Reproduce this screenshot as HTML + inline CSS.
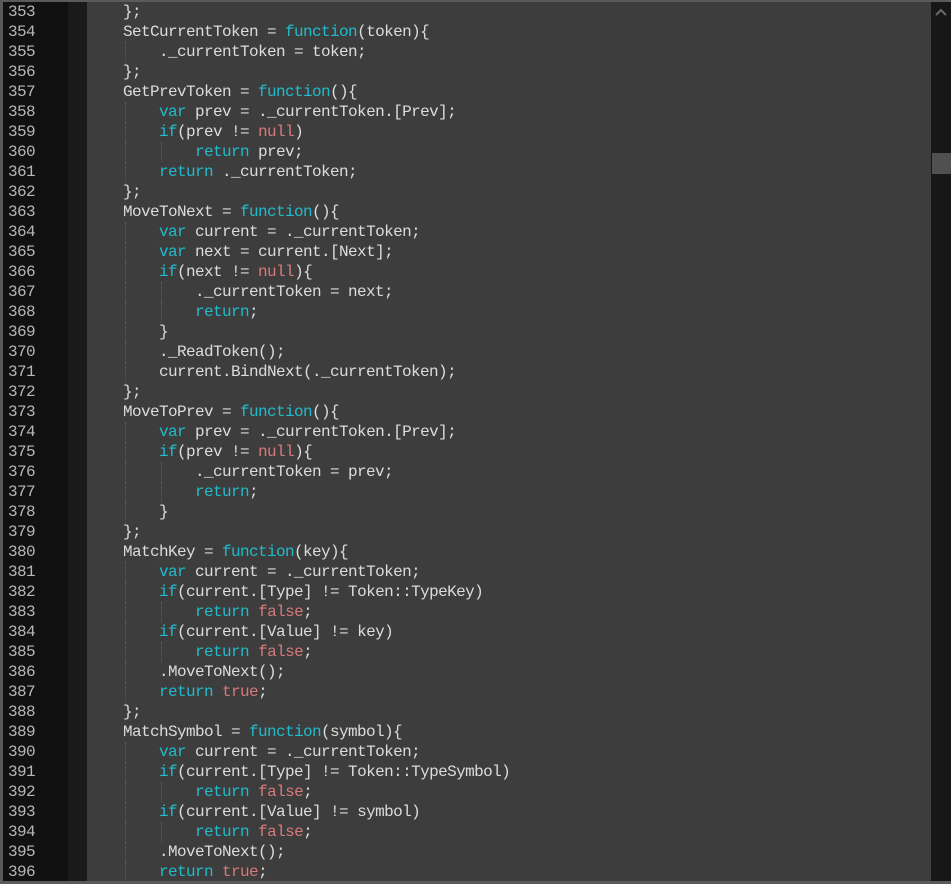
<!DOCTYPE html>
<html><head><meta charset="utf-8"><style>
html,body{margin:0;padding:0;width:951px;height:884px;overflow:hidden;background:#3d3d3d;}
#top{position:absolute;left:0;top:0;width:951px;height:2px;background:#5a5a5a;}
#bot{position:absolute;left:0;top:881px;width:951px;height:3px;background:#5a5a5a;}
#lb{position:absolute;left:0;top:0;width:3px;height:884px;background:#5a5a5a;}
#gut{position:absolute;left:3px;top:2px;width:65px;height:879px;background:#111;}
#strip{position:absolute;left:68px;top:2px;width:19px;height:879px;background:#1a1a1a;}
#sb{position:absolute;left:931px;top:2px;width:20px;height:879px;background:#171717;}
#thumb{position:absolute;left:932px;top:153px;width:19px;height:21px;background:#505050;}
.ln{position:absolute;left:8px;font:16px/20px "Liberation Mono",monospace;letter-spacing:-0.6px;color:#b8b8b8;white-space:pre;}
.cd{position:absolute;left:87px;font:16px/20px "Liberation Mono",monospace;letter-spacing:-0.6px;color:#dcdcdc;white-space:pre;}
.k{color:#20bccc}.n{color:#d87a7a}
.g{position:absolute;width:0;height:20px;border-left:1px dotted #5c5c5c;}
</style></head><body>
<div id="top"></div><div id="lb"></div><div id="gut"></div><div id="strip"></div>
<div id="sb"></div><div id="thumb"></div>
<svg style="position:absolute;left:934px;top:7px" width="14" height="10"><path d="M2 8 L7 3 L12 8" stroke="#6a6a6a" stroke-width="2" fill="none"/></svg>
<div class="ln" style="top:2px">353
354
355
356
357
358
359
360
361
362
363
364
365
366
367
368
369
370
371
372
373
374
375
376
377
378
379
380
381
382
383
384
385
386
387
388
389
390
391
392
393
394
395
396</div>
<div class="cd" id="code" style="top:2px">    };
    SetCurrentToken = <span class="k">function</span>(token){
        ._currentToken = token;
    };
    GetPrevToken = <span class="k">function</span>(){
        <span class="k">var</span> prev = ._currentToken.[Prev];
        <span class="k">if</span>(prev != <span class="n">null</span>)
            <span class="k">return</span> prev;
        <span class="k">return</span> ._currentToken;
    };
    MoveToNext = <span class="k">function</span>(){
        <span class="k">var</span> current = ._currentToken;
        <span class="k">var</span> next = current.[Next];
        <span class="k">if</span>(next != <span class="n">null</span>){
            ._currentToken = next;
            <span class="k">return</span>;
        }
        ._ReadToken();
        current.BindNext(._currentToken);
    };
    MoveToPrev = <span class="k">function</span>(){
        <span class="k">var</span> prev = ._currentToken.[Prev];
        <span class="k">if</span>(prev != <span class="n">null</span>){
            ._currentToken = prev;
            <span class="k">return</span>;
        }
    };
    MatchKey = <span class="k">function</span>(key){
        <span class="k">var</span> current = ._currentToken;
        <span class="k">if</span>(current.[Type] != Token::TypeKey)
            <span class="k">return</span> <span class="n">false</span>;
        <span class="k">if</span>(current.[Value] != key)
            <span class="k">return</span> <span class="n">false</span>;
        .MoveToNext();
        <span class="k">return</span> <span class="n">true</span>;
    };
    MatchSymbol = <span class="k">function</span>(symbol){
        <span class="k">var</span> current = ._currentToken;
        <span class="k">if</span>(current.[Type] != Token::TypeSymbol)
            <span class="k">return</span> <span class="n">false</span>;
        <span class="k">if</span>(current.[Value] != symbol)
            <span class="k">return</span> <span class="n">false</span>;
        .MoveToNext();
        <span class="k">return</span> <span class="n">true</span>;</div>
<div id="bot"></div>
<script>
var lines=document.getElementById('code').textContent.split('\n');
lines.forEach(function(l,i){var s=l.match(/^ */)[0].length;for(var c=4;c<s;c+=4){var d=document.createElement('div');d.className='g';d.style.left=(87+c*9+2)+'px';d.style.top=(2+i*20)+'px';document.body.appendChild(d);}});
</script>
</body></html>
